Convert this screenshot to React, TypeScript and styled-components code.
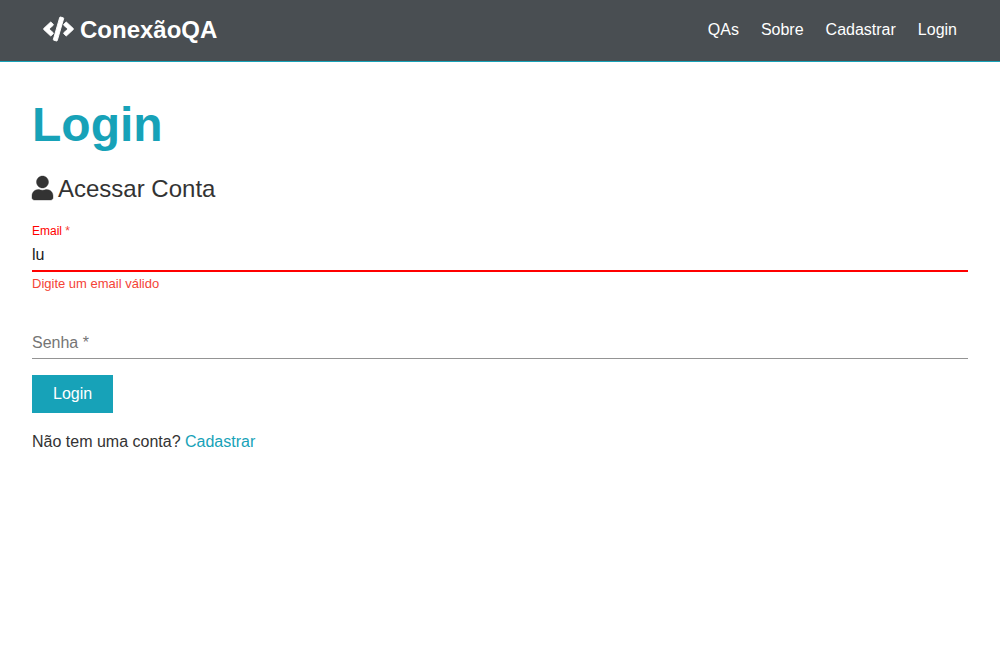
import React, { useState } from "react";
import styled, { createGlobalStyle } from "styled-components";
import { FaCode, FaUser } from "react-icons/fa";

const GlobalStyle = createGlobalStyle`
  * { box-sizing: border-box; margin: 0; padding: 0; }
  body {
    font-family: "Liberation Sans", Arial, sans-serif;
    font-size: 16px;
    line-height: 26px;
    color: #333333;
    background: #ffffff;
  }
  a { color: #17a2b8; text-decoration: none; }
`;

const Navbar = styled.nav`
  display: flex;
  align-items: center;
  justify-content: space-between;
  padding: 10px 32px 12px;
  background: #494e52;
  border-bottom: 1px solid #17a2b8;
`;

const Brand = styled.a`
  && { color: #ffffff; }
  display: flex;
  align-items: center;
  gap: 6px;
  padding: 0 11px;
  font-size: 24px;
  font-weight: 700;
  line-height: 39px;
`;

const CodeIcon = styled(FaCode)`
  width: 31px;
  height: 24px;
  margin-bottom: 2px;
  overflow: visible;
  stroke-width: 20;
`;

const NavLinks = styled.ul`
  display: flex;
  list-style: none;
`;

const NavLink = styled.a`
  && { color: #ffffff; }
  padding: 7px 11px;
`;

const Container = styled.main`
  padding: 34px 32px;
`;

const Title = styled.h1`
  font-size: 48px;
  line-height: 58px;
  margin-bottom: 16px;
  color: #17a2b8;
`;

const Lead = styled.p`
  display: flex;
  align-items: center;
  gap: 5px;
  margin-bottom: 16px;
  font-size: 24px;
  line-height: 38px;
`;

const UserIcon = styled(FaUser)`
  width: 21px;
  height: 24px;
  margin-bottom: 2px;
  overflow: visible;
  stroke-width: 8;
`;

const Field = styled.div`
  position: relative;
  display: flex;
  flex-direction: column;
`;

const Label = styled.label`
  font-size: 12px;
  line-height: 14px;
  color: #ff0000;
`;

const Asterisk = styled.span`
  color: #f44336;
`;

/* Rests over the empty input until it is filled. */
const RestingLabel = styled.label<{ $hidden: boolean }>`
  position: absolute;
  top: 5px;
  left: 0;
  color: #757575;
  pointer-events: none;
  visibility: ${(p) => (p.$hidden ? "hidden" : "visible")};
`;

const Input = styled.input<{ $error?: boolean }>`
  width: 100%;
  height: 34px;
  padding-top: 2px;
  border: 0;
  border-bottom: ${(p) => (p.$error ? "2px solid #ff0000" : "1px solid #949494")};
  outline: 0;
  background: transparent;
  font: inherit;
  color: #212121;
`;

const ErrorText = styled.p`
  margin: 4px 0 33px;
  font-size: 13px;
  line-height: 16px;
  color: #f44336;
`;

const Button = styled.button`
  margin: 16px 0;
  padding: 6px 21px;
  border: 0;
  background: #17a2b8;
  color: #ffffff;
  font: inherit;
  cursor: pointer;
`;

const links = ["QAs", "Sobre", "Cadastrar", "Login"];

export default function App() {
  const [email, setEmail] = useState("lu");
  const [password, setPassword] = useState("");
  return (
    <>
      <GlobalStyle />
      <Navbar>
        <Brand href="#"><CodeIcon /> ConexãoQA</Brand>
        <NavLinks>
          {links.map((text) => (
            <li key={text}><NavLink href="#">{text}</NavLink></li>
          ))}
        </NavLinks>
      </Navbar>
      <Container>
        <Title>Login</Title>
        <Lead><UserIcon /> Acessar Conta</Lead>
        <form onSubmit={(e) => e.preventDefault()}>
          <Field>
            <Label htmlFor="email">Email <Asterisk>*</Asterisk></Label>
            <Input
              id="email"
              $error
              aria-invalid
              aria-describedby="email-error"
              value={email}
              onChange={(e) => setEmail(e.target.value)}
            />
            <ErrorText id="email-error">Digite um email válido</ErrorText>
          </Field>
          <Field>
            <RestingLabel htmlFor="password" $hidden={password !== ""}>Senha *</RestingLabel>
            <Input
              id="password"
              type="password"
              value={password}
              onChange={(e) => setPassword(e.target.value)}
            />
          </Field>
          <Button type="submit">Login</Button>
        </form>
        <p>Não tem uma conta? <a href="#">Cadastrar</a></p>
      </Container>
    </>
  );
}
